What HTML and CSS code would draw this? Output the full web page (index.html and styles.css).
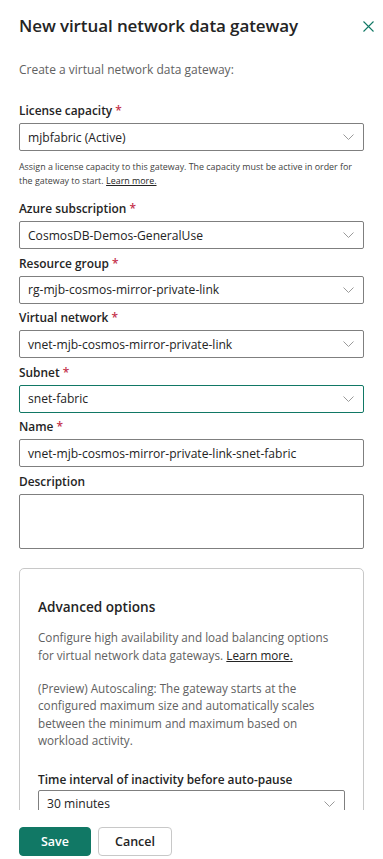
FILE: index.html
```html
<!DOCTYPE html>
<html lang="en">
<head>
<meta charset="utf-8">
<title>New virtual network data gateway</title>
<link rel="stylesheet" href="styles.css">
</head>
<body>
<div class="pane">
  <header class="header">
    <h1 class="title">New virtual network data gateway</h1>
    <button class="close" aria-label="Close">
      <svg width="11" height="11" viewBox="0 0 11 11"><path d="M0.5 0.5 L10.5 10.5 M10.5 0.5 L0.5 10.5" stroke="#117865" stroke-width="1.1" fill="none"/></svg>
    </button>
  </header>
  <div class="scroll">
    <p class="intro">Create a virtual network data gateway:</p>

    <div class="field first">
      <div class="label">License capacity <span class="req">*</span></div>
      <div class="box select"><span>mjbfabric (Active)</span><svg class="chev" width="11" height="6" viewBox="0 0 11 6"><path d="M0.5 0.5 L5.5 5.5 L10.5 0.5" stroke="#9a9a9a" stroke-width="1" fill="none"/></svg></div>
    </div>
    <p class="help">Assign a license capacity to this gateway. The capacity must be active in order for the gateway to start.<a class="link" href="#">Learn more.</a></p>

    <div class="field">
      <div class="label">Azure subscription <span class="req">*</span></div>
      <div class="box select"><span>CosmosDB-Demos-GeneralUse</span><svg class="chev" width="11" height="6" viewBox="0 0 11 6"><path d="M0.5 0.5 L5.5 5.5 L10.5 0.5" stroke="#9a9a9a" stroke-width="1" fill="none"/></svg></div>
    </div>
    <div class="field">
      <div class="label">Resource group <span class="req">*</span></div>
      <div class="box select"><span>rg-mjb-cosmos-mirror-private-link</span><svg class="chev" width="11" height="6" viewBox="0 0 11 6"><path d="M0.5 0.5 L5.5 5.5 L10.5 0.5" stroke="#9a9a9a" stroke-width="1" fill="none"/></svg></div>
    </div>
    <div class="field">
      <div class="label">Virtual network <span class="req">*</span></div>
      <div class="box select"><span>vnet-mjb-cosmos-mirror-private-link</span><svg class="chev" width="11" height="6" viewBox="0 0 11 6"><path d="M0.5 0.5 L5.5 5.5 L10.5 0.5" stroke="#9a9a9a" stroke-width="1" fill="none"/></svg></div>
    </div>
    <div class="field">
      <div class="label">Subnet <span class="req">*</span></div>
      <div class="box select focused"><span>snet-fabric</span><svg class="chev" width="11" height="6" viewBox="0 0 11 6"><path d="M0.5 0.5 L5.5 5.5 L10.5 0.5" stroke="#9a9a9a" stroke-width="1" fill="none"/></svg></div>
    </div>
    <div class="field">
      <div class="label">Name <span class="req">*</span></div>
      <div class="box"><span>vnet-mjb-cosmos-mirror-private-link-snet-fabric</span></div>
    </div>
    <div class="field">
      <div class="label">Description</div>
      <div class="box textarea"></div>
    </div>

    <section class="advanced">
      <h2 class="adv-title">Advanced options</h2>
      <p class="adv-text">Configure high availability and load balancing options for virtual network data gateways.<a class="link" href="#">Learn more.</a></p>
      <p class="adv-text second">(Preview) Autoscaling: The gateway starts at the configured maximum size and automatically scales between the minimum and maximum based on workload activity.</p>
      <div class="adv-label">Time interval of inactivity before auto-pause</div>
      <div class="box select"><span>30 minutes</span><svg class="chev" width="11" height="6" viewBox="0 0 11 6"><path d="M0.5 0.5 L5.5 5.5 L10.5 0.5" stroke="#9a9a9a" stroke-width="1" fill="none"/></svg></div>
    </section>
  </div>
  <footer class="footer">
    <button class="btn primary">Save</button>
    <button class="btn secondary">Cancel</button>
  </footer>
</div>
</body>
</html>
```

FILE: styles.css
```css
* { box-sizing: border-box; }
html, body { margin: 0; padding: 0; background: #fff; }
body {
  font-family: "Segoe UI", "Open Sans", "Noto Sans", sans-serif;
  color: #242424;
  width: 383px;
  height: 859px;
  overflow: hidden;
}
.pane {
  display: flex;
  flex-direction: column;
  height: 859px;
}
.header {
  display: flex;
  align-items: center;
  justify-content: space-between;
  padding: 14px 8px 0 19px;
  height: 38px;
}
.title {
  margin: 0;
  font-size: 17px;
  font-weight: 600;
  line-height: 24px;
  letter-spacing: -0.1px;
  color: #242424;
}
.close {
  border: 0;
  background: none;
  padding: 0;
  width: 11px;
  height: 11px;
  margin-right: 1px;
  display: flex;
}
.scroll {
  height: 772px;
  overflow: hidden;
  padding: 0 19px;
}
.intro {
  margin: 23px 0 17.5px;
  font-size: 12px;
  line-height: 18px;
  color: #616161;
}
.field { display: flex; flex-direction: column; }
.label {
  margin-top: 4.5px;
  margin-bottom: 4px;
  font-size: 11.9px;
  font-weight: 600;
  line-height: 18px;
  color: #242424;
}
.req { color: #c4314b; font-weight: 600; }
.box {
  height: 28px;
  border: 1px solid #7f7f7f;
  border-radius: 2px;
  display: flex;
  align-items: center;
  justify-content: space-between;
  padding: 0 9px 0 8px;
  font-size: 12.1px;
  color: #242424;
}
.box.focused { border-color: #117865; }
.box.textarea { height: 55px; }
.chev { flex: none; }
.help {
  margin: 9px 0 6.5px;
  font-size: 8.9px;
  line-height: 14px;
  color: #424242;
}
.link { color: #242424; text-decoration: underline; margin-left: 0.28em; }
.advanced {
  margin-top: 19.5px;
  border: 1px solid #c8c8c8;
  border-radius: 5px;
  padding: 28px 18px 20px;
}
.adv-title {
  margin: 0;
  font-size: 13.6px;
  font-weight: 600;
  line-height: 20px;
  color: #242424;
}
.adv-text {
  margin: 11px 0 0;
  font-size: 11.7px;
  line-height: 18px;
  color: #616161;
  padding-right: 4px;
}
.adv-text.second { margin-top: 16px; line-height: 17.4px; }
.adv-label {
  margin-top: 20px;
  margin-bottom: 2px;
  font-size: 11.9px;
  font-weight: 600;
  line-height: 18px;
  color: #242424;
}
.footer {
  display: flex;
  gap: 7px;
  padding: 17px 19px 0;
}
.btn {
  height: 29px;
  border-radius: 4px;
  font-family: inherit;
  font-size: 12.5px;
  font-weight: 600;
  padding: 0;
  cursor: pointer;
}
.btn.primary {
  width: 72px;
  background: #117865;
  border: 1px solid #117865;
  color: #fff;
}
.btn.secondary {
  width: 74px;
  background: #fff;
  border: 1px solid #c8c8c8;
  color: #242424;
}
```
